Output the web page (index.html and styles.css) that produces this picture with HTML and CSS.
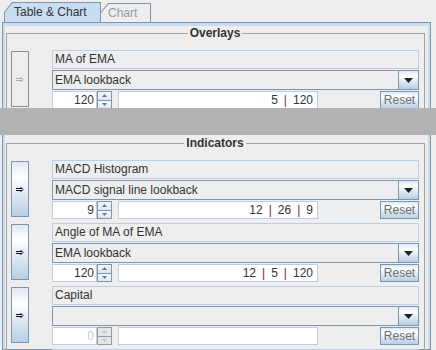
FILE: index.html
```html
<!DOCTYPE html>
<html lang="en">
<head>
    <meta charset="UTF-8">
    <meta name="viewport" content="width=device-width, initial-scale=1.0">
    <title>Table &amp; Chart</title>
    <link rel="stylesheet" href="styles.css">
</head>
<body>

    <div class="window">
        <div class="view view-top">
            <div class="tabs">
                <div class="tab tab-active"><span class="tab-label">Table &amp; Chart</span></div>
                <div class="tab"><span class="tab-label">Chart</span></div>
            </div>
            <div class="pane">
                <fieldset class="group">
                    <legend>Overlays</legend>

                    <div class="row">
                        <div class="mover mover-off">
                            <svg width="8" height="5" viewBox="0 0 8 5"><path d="M0 1.5H6M0 3.5H6M4.5 0L7 2.5L4.5 5" fill="none" stroke="currentColor"/></svg>
                        </div>
                        <div class="fields">
                            <div class="name">MA of EMA</div>
                            <div class="combo">
                                <div class="combo-value">EMA lookback</div>
                                <div class="combo-arrow"><svg width="9" height="5" viewBox="0 0 9 5"><path d="M0 0H9L4.5 5Z" fill="#222"/></svg></div>
                            </div>
                            <div class="controls">
                                <div class="spinner">
                                    <div class="spin-field">120</div>
                                    <div class="spin-buttons">
                                        <div class="spin-btn"><svg width="5" height="3" viewBox="0 0 5 3"><path d="M0 3H5L2.5 0Z" fill="#777"/></svg></div>
                                        <div class="spin-btn"><svg width="5" height="3" viewBox="0 0 5 3"><path d="M0 0H5L2.5 3Z" fill="#777"/></svg></div>
                                    </div>
                                </div>
                                <div class="params">5<span class="sep">|</span>120</div>
                                <div class="reset">Reset</div>
                            </div>
                        </div>
                    </div>
                </fieldset>
            </div>
        </div>

        <div class="divider"></div>

        <div class="view view-bottom">
            <div class="pane pane-cont">
                <fieldset class="group">
                    <legend>Indicators</legend>

                    <div class="row">
                        <div class="mover">
                            <svg width="8" height="5" viewBox="0 0 8 5"><path d="M0 1.5H6M0 3.5H6M4.5 0L7 2.5L4.5 5" fill="none" stroke="currentColor"/></svg>
                        </div>
                        <div class="fields">
                            <div class="name">MACD Histogram</div>
                            <div class="combo">
                                <div class="combo-value">MACD signal line lookback</div>
                                <div class="combo-arrow"><svg width="9" height="5" viewBox="0 0 9 5"><path d="M0 0H9L4.5 5Z" fill="#222"/></svg></div>
                            </div>
                            <div class="controls">
                                <div class="spinner">
                                    <div class="spin-field">9</div>
                                    <div class="spin-buttons">
                                        <div class="spin-btn"><svg width="5" height="3" viewBox="0 0 5 3"><path d="M0 3H5L2.5 0Z" fill="#777"/></svg></div>
                                        <div class="spin-btn"><svg width="5" height="3" viewBox="0 0 5 3"><path d="M0 0H5L2.5 3Z" fill="#777"/></svg></div>
                                    </div>
                                </div>
                                <div class="params">12<span class="sep">|</span>26<span class="sep">|</span>9</div>
                                <div class="reset">Reset</div>
                            </div>
                        </div>
                    </div>

                    <div class="row">
                        <div class="mover">
                            <svg width="8" height="5" viewBox="0 0 8 5"><path d="M0 1.5H6M0 3.5H6M4.5 0L7 2.5L4.5 5" fill="none" stroke="currentColor"/></svg>
                        </div>
                        <div class="fields">
                            <div class="name">Angle of MA of EMA</div>
                            <div class="combo">
                                <div class="combo-value">EMA lookback</div>
                                <div class="combo-arrow"><svg width="9" height="5" viewBox="0 0 9 5"><path d="M0 0H9L4.5 5Z" fill="#222"/></svg></div>
                            </div>
                            <div class="controls">
                                <div class="spinner">
                                    <div class="spin-field">120</div>
                                    <div class="spin-buttons">
                                        <div class="spin-btn"><svg width="5" height="3" viewBox="0 0 5 3"><path d="M0 3H5L2.5 0Z" fill="#777"/></svg></div>
                                        <div class="spin-btn"><svg width="5" height="3" viewBox="0 0 5 3"><path d="M0 0H5L2.5 3Z" fill="#777"/></svg></div>
                                    </div>
                                </div>
                                <div class="params">12<span class="sep">|</span>5<span class="sep">|</span>120</div>
                                <div class="reset">Reset</div>
                            </div>
                        </div>
                    </div>

                    <div class="row">
                        <div class="mover">
                            <svg width="8" height="5" viewBox="0 0 8 5"><path d="M0 1.5H6M0 3.5H6M4.5 0L7 2.5L4.5 5" fill="none" stroke="currentColor"/></svg>
                        </div>
                        <div class="fields">
                            <div class="name">Capital</div>
                            <div class="combo">
                                <div class="combo-value"></div>
                                <div class="combo-arrow"><svg width="9" height="5" viewBox="0 0 9 5"><path d="M0 0H9L4.5 5Z" fill="#222"/></svg></div>
                            </div>
                            <div class="controls">
                                <div class="spinner spinner-off">
                                    <div class="spin-field">0</div>
                                    <div class="spin-buttons">
                                        <div class="spin-btn"><svg width="5" height="3" viewBox="0 0 5 3"><path d="M0 3H5L2.5 0Z" fill="#b8c4d0"/></svg></div>
                                        <div class="spin-btn"><svg width="5" height="3" viewBox="0 0 5 3"><path d="M0 0H5L2.5 3Z" fill="#b8c4d0"/></svg></div>
                                    </div>
                                </div>
                                <div class="params"></div>
                                <div class="reset">Reset</div>
                            </div>
                        </div>
                    </div>

                    <div class="row">
                        <div class="mover"></div>
                        <div class="fields">
                            <div class="name"></div>
                        </div>
                    </div>
                </fieldset>
            </div>
        </div>
    </div>

</body>
</html>
```

FILE: styles.css
```css
body {
    margin: 0;
    background: #eeeeee;
    font-family: "Liberation Sans", Arial, sans-serif;
    font-size: 12px;
    color: #333333;
}
.window {
    width: 436px;
    height: 350px;
    overflow: hidden;
}
.view-top {
    height: 108px;
    overflow: hidden;
}
.view-bottom {
    height: 215px;
    overflow: hidden;
}
.divider {
    height: 27px;
    background: #b3b3b3;
}

/* tabs */
.tabs {
    display: flex;
    align-items: flex-end;
    height: 22px;
    padding: 2px 0 0 4px;
    box-sizing: border-box;
}
.tab {
    height: 19px;
    width: 51px;
    margin-left: -1px;
    padding: 1px 1px 0 1px;
    box-sizing: border-box;
    background: #8094ad;
    clip-path: polygon(0 100%, 0 10px, 8px 0, 100% 0, 100% 100%);
}
.tab-label {
    display: block;
    height: 100%;
    padding-left: 7px;
    line-height: 18px;
    color: #9a9a9a;
    background: #eeeeee;
    clip-path: polygon(0 100%, 0 9.3px, 7.5px 0, 100% 0, 100% 100%);
}
.tab-active {
    height: 20px;
    width: 97px;
    margin-left: 0;
}
.tab-active .tab-label {
    padding-left: 9px;
    color: #333333;
    background: #c8ddf2;
}

/* tab content */
.pane {
    margin-left: 2px;
    width: 429px;
    min-height: 100px;
    box-sizing: border-box;
    border: 1px solid #8094ad;
    padding: 3px 5px 0 3px;
    box-shadow: inset 0 3px 0 #c8ddf2, inset 2px 0 0 #c8ddf2, inset -2px 0 0 #c8ddf2;
}
.pane-cont {
    height: 100%;
    border-top: 0;
    padding-top: 1px;
    box-shadow: inset 2px 0 0 #c8ddf2, inset -2px 0 0 #c8ddf2;
}
.group {
    margin: 0;
    min-width: 0;
    border: 1px solid #a3a3a3;
    padding: 10px 5px 0 4px;
}
.group legend {
    margin: 0 auto;
    padding: 0 2px;
    font-weight: bold;
    line-height: 14px;
}

/* indicator rows */
.row {
    display: flex;
    margin-bottom: 4px;
}
.mover {
    flex: none;
    width: 18px;
    height: 56px;
    margin-top: 1px;
    box-sizing: border-box;
    border: 1px solid #7f93ad;
    background: linear-gradient(#dde8f3, #ffffff 28%, #dde8f3 60%, #b8cfe5);
    color: #111111;
    display: flex;
    align-items: center;
    justify-content: center;
}
.mover-off {
    border-color: #8e8e8e;
    background: #eeeeee;
    color: #a8a8a8;
}
.fields {
    flex: 1;
    margin-left: 23px;
    display: flex;
    flex-direction: column;
}
.name {
    height: 19px;
    box-sizing: border-box;
    border: 1px solid #b8cfe5;
    padding-left: 2px;
    line-height: 17px;
}
.combo {
    display: flex;
    height: 20px;
    margin-top: 1px;
    box-sizing: border-box;
    border: 1px solid #8094ad;
}
.combo-value {
    flex: 1;
    padding-left: 2px;
    line-height: 18px;
}
.combo-arrow {
    width: 19px;
    border-left: 1px solid #8094ad;
    background: linear-gradient(#dde8f3, #ffffff 28%, #dde8f3 60%, #b8cfe5);
    display: flex;
    align-items: center;
    justify-content: center;
}
.controls {
    display: flex;
    height: 18px;
    margin-top: 1px;
}
.spinner {
    display: flex;
}
.spin-field {
    width: 45px;
    box-sizing: border-box;
    border: 1px solid #b8cfe5;
    background: #ffffff;
    padding-right: 2px;
    text-align: right;
    line-height: 16px;
}
.spin-buttons {
    width: 15px;
    box-sizing: border-box;
    border: 1px solid #8094ad;
    display: flex;
    flex-direction: column;
}
.spin-btn {
    flex: 1;
    display: flex;
    align-items: center;
    justify-content: center;
    background: linear-gradient(#f4f7fa, #dde6ef);
}
.spin-btn + .spin-btn {
    border-top: 1px solid #8094ad;
}
.spinner-off .spin-field {
    color: #b8cfe5;
}
.spinner-off .spin-buttons,
.spinner-off .spin-btn + .spin-btn {
    border-color: #9a9a9a;
}
.spinner-off .spin-btn {
    background: #e6e6e6;
}
.params {
    width: 200px;
    margin-left: 6px;
    box-sizing: border-box;
    border: 1px solid #b8cfe5;
    background: #ffffff;
    padding-right: 4px;
    text-align: right;
    line-height: 16px;
}
.sep {
    margin: 0 6px;
    color: #6b2d3c;
}
.reset {
    margin-left: auto;
    width: 39px;
    box-sizing: border-box;
    border: 1px solid #8094ad;
    background: linear-gradient(#dde8f3, #ffffff 28%, #dde8f3 60%, #b8cfe5);
    color: #6e6e6e;
    text-align: center;
    line-height: 16px;
}
```
